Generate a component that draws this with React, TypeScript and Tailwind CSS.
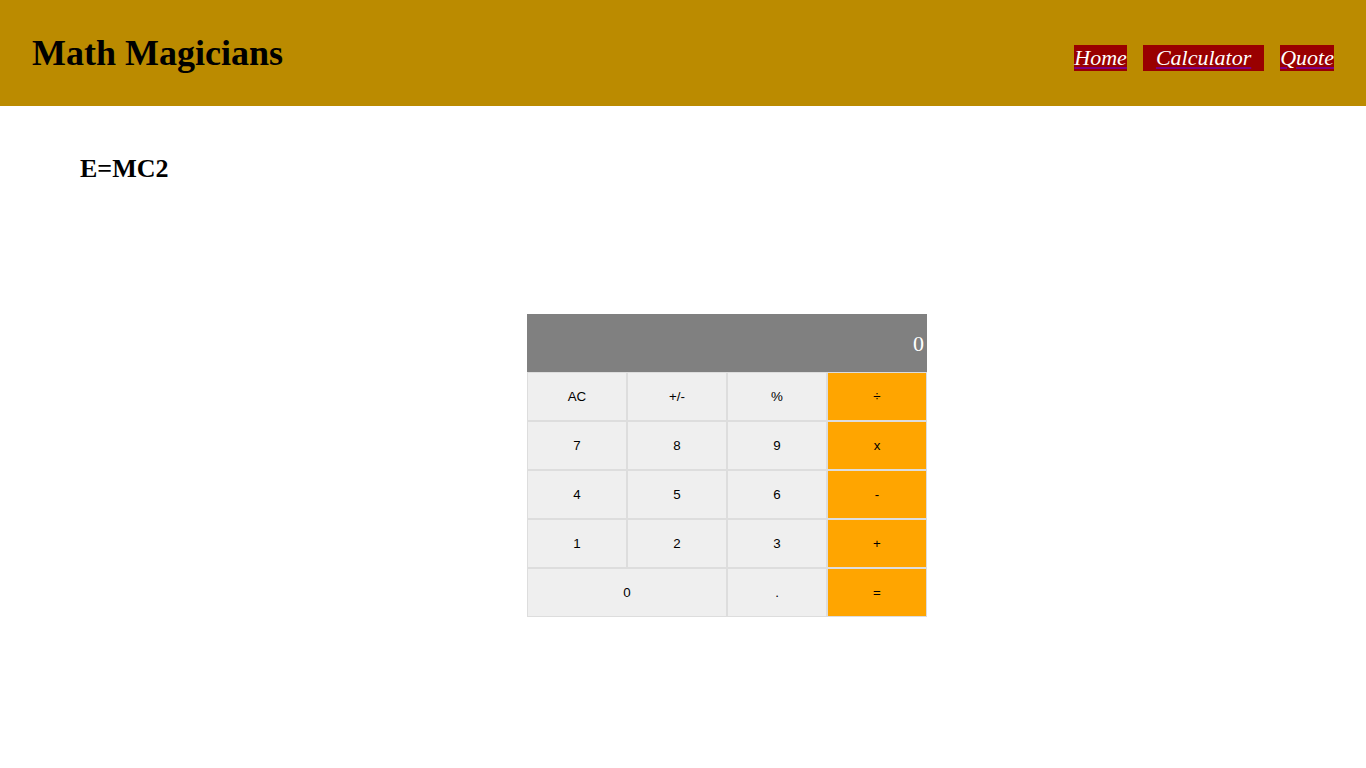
const rows: { label: string; wide?: boolean; op?: boolean }[][] = [
  [{ label: 'AC' }, { label: '+/-' }, { label: '%' }, { label: '÷', op: true }],
  [{ label: '7' }, { label: '8' }, { label: '9' }, { label: 'x', op: true }],
  [{ label: '4' }, { label: '5' }, { label: '6' }, { label: '-', op: true }],
  [{ label: '1' }, { label: '2' }, { label: '3' }, { label: '+', op: true }],
  [{ label: '0', wide: true }, { label: '.' }, { label: '=', op: true }],
];

const App = () => {
  return (
    <div className="min-h-screen bg-white font-['Liberation_Serif',serif]">
      <header className="flex h-[106px] items-start justify-between bg-[#bb8b00] pl-8 pr-8">
        <h1 className="mt-[32px] text-[36px] font-bold leading-[42px] text-black">Math Magicians</h1>
        <nav className="mt-[45px] flex gap-4 text-[22px] italic leading-[26px]">
          <a href="#" className="bg-[#990000] text-white underline decoration-[#800080]">Home</a>
          <a href="#" className="bg-[#990000] px-[13px] text-white underline decoration-[#800080]">Calculator</a>
          <a href="#" className="bg-[#990000] text-white underline decoration-[#800080]">Quote</a>
        </nav>
      </header>

      <main className="pl-20">
        <h2 className="mt-[53px] text-[26px] font-bold leading-[20px] text-black">E=MC2</h2>

        <div className="ml-[447px] mt-[135px] w-[400px]">
          <div className="flex h-[58px] items-center justify-end bg-[#808080] pr-[3px] text-[22px] text-white">
            0
          </div>
          <div className="grid grid-cols-4">
            {rows.flat().map((b) => (
              <button
                key={b.label}
                className={`h-[49px] border border-[#dddddd] font-['Liberation_Sans',Arial,sans-serif] text-[13.33px] text-black ${
                  b.wide ? 'col-span-2' : ''
                } ${b.op ? 'bg-[#ffa500]' : 'bg-[#efefef]'}`}
              >
                {b.label}
              </button>
            ))}
          </div>
        </div>
      </main>
    </div>
  );
};

export default App;
